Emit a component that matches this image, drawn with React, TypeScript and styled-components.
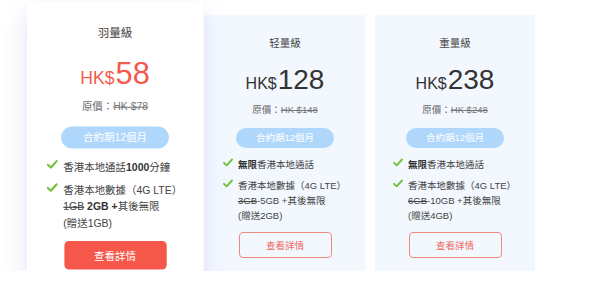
import React from 'react';
import styled, { createGlobalStyle } from 'styled-components';

const GlobalStyle = createGlobalStyle`
  html, body {
    margin: 0;
    padding: 0;
    background: #ffffff;
    font-family: "Liberation Sans", "Noto Sans CJK TC", sans-serif;
  }
`;

interface Plan {
  name: string;
  price: string;
  original: string;
  calls: React.ReactNode;
  data: React.ReactNode;
  featured?: boolean;
}

const plans: Plan[] = [
  {
    name: '羽量級',
    price: '58',
    original: 'HK $78',
    featured: true,
    calls: (
      <>
        香港本地通話<b>1000</b>分鐘
      </>
    ),
    data: (
      <>
        香港本地數據（4G LTE）
        <br />
        <s>1GB</s> <b>2GB +</b>其後無限
        <br />
        (贈送1GB)
      </>
    ),
  },
  {
    name: '轻量級',
    price: '128',
    original: 'HK $148',
    calls: (
      <>
        <b>無限</b>香港本地通話
      </>
    ),
    data: (
      <>
        香港本地數據（4G LTE）
        <br />
        <s>3GB</s>-5GB +其後無限
        <br />
        (贈送2GB)
      </>
    ),
  },
  {
    name: '重量級',
    price: '238',
    original: 'HK $248',
    calls: (
      <>
        <b>無限</b>香港本地通話
      </>
    ),
    data: (
      <>
        香港本地數據（4G LTE）
        <br />
        <s>6GB</s>-10GB +其後無限
        <br />
        (贈送4GB)
      </>
    ),
  },
];

export default function App() {
  return (
    <>
      <GlobalStyle />
      <PlanRow>
        {plans.map((plan) => (
          <PlanCard key={plan.name} featured={plan.featured}>
            <PlanName>{plan.name}</PlanName>
            <Price featured={plan.featured}>
              <Currency>HK$</Currency>
              <Amount>{plan.price}</Amount>
            </Price>
            <Original>
              原價：<s>{plan.original}</s>
            </Original>
            <Term>合約期12個月</Term>
            <FeatureList>
              <Feature>
                <Check />
                <span>{plan.calls}</span>
              </Feature>
              <Feature>
                <Check />
                <span>{plan.data}</span>
              </Feature>
            </FeatureList>
            <DetailButton featured={plan.featured}>查看詳情</DetailButton>
          </PlanCard>
        ))}
      </PlanRow>
    </>
  );
}

const Check = () => (
  <CheckIcon viewBox="0 0 12 10">
    <path d="M1.2 5.4 L4.4 8.4 L10.8 1.4" fill="none" stroke="#72c03c" strokeWidth="2.3" strokeLinecap="round" strokeLinejoin="round" />
  </CheckIcon>
);

// cards sit side by side, the featured one is blown up a little over its neighbours
const PlanRow = styled.div`
  display: flex;
  gap: 10px;
  padding: 15px 0 0 35px;
  align-items: flex-start;
`;

const PlanCard = styled.div<{ featured?: boolean }>`
  position: relative;
  width: 160px;
  height: 256px;
  box-sizing: border-box;
  display: flex;
  flex-direction: column;
  align-items: center;
  padding-top: 21px;
  background: ${(p) => (p.featured ? '#ffffff' : '#f3f8ff')};
  box-shadow: ${(p) => (p.featured ? '0 9px 20px rgba(115, 115, 240, 0.2)' : 'none')};
  transform: ${(p) => (p.featured ? 'scale(1.1)' : 'none')};
  z-index: ${(p) => (p.featured ? 2 : 1)};
`;

const PlanName = styled.div`
  font-size: 10.5px;
  line-height: 14px;
  color: #444;
`;

const Price = styled.div<{ featured?: boolean }>`
  display: flex;
  align-items: baseline;
  margin-top: 16px;
  color: ${(p) => (p.featured ? '#f35a4b' : '#333')};
  line-height: 28px;
`;

const Currency = styled.span`
  font-size: 16px;
  margin-right: 1px;
`;

const Amount = styled.span`
  font-size: 28px;
`;

const Original = styled.div`
  margin-top: 6px;
  font-size: 9.5px;
  line-height: 12px;
  color: #666;

  s {
    color: #777;
  }
`;

const Term = styled.div`
  margin-top: 12px;
  width: 98px;
  height: 20px;
  border-radius: 10px;
  background: #afd7fb;
  color: #ffffff;
  font-size: 9.5px;
  line-height: 20px;
  text-align: center;
`;

const FeatureList = styled.div`
  display: flex;
  flex-direction: column;
  gap: 6px;
  align-self: stretch;
  padding: 0 6px 0 18px;
  margin-top: 9px;
`;

const Feature = styled.div`
  display: flex;
  align-items: flex-start;
  gap: 5px;
  font-size: 9.5px;
  line-height: 15px;
  color: #444;
  white-space: nowrap;

  b {
    font-weight: bold;
    color: #333;
  }
`;

const CheckIcon = styled.svg`
  width: 10px;
  height: 9px;
  flex: 0 0 auto;
  margin-top: 1px;
`;

const DetailButton = styled.button<{ featured?: boolean }>`
  margin-top: 9px;
  width: 93px;
  height: 26px;
  border-radius: 4px;
  border: 1px solid ${(p) => (p.featured ? '#f5574b' : '#f08a7f')};
  background: ${(p) => (p.featured ? '#f5574b' : 'transparent')};
  color: ${(p) => (p.featured ? '#ffffff' : '#f0665a')};
  font-family: inherit;
  font-size: 9.5px;
  padding: 0;
  cursor: pointer;
`;
